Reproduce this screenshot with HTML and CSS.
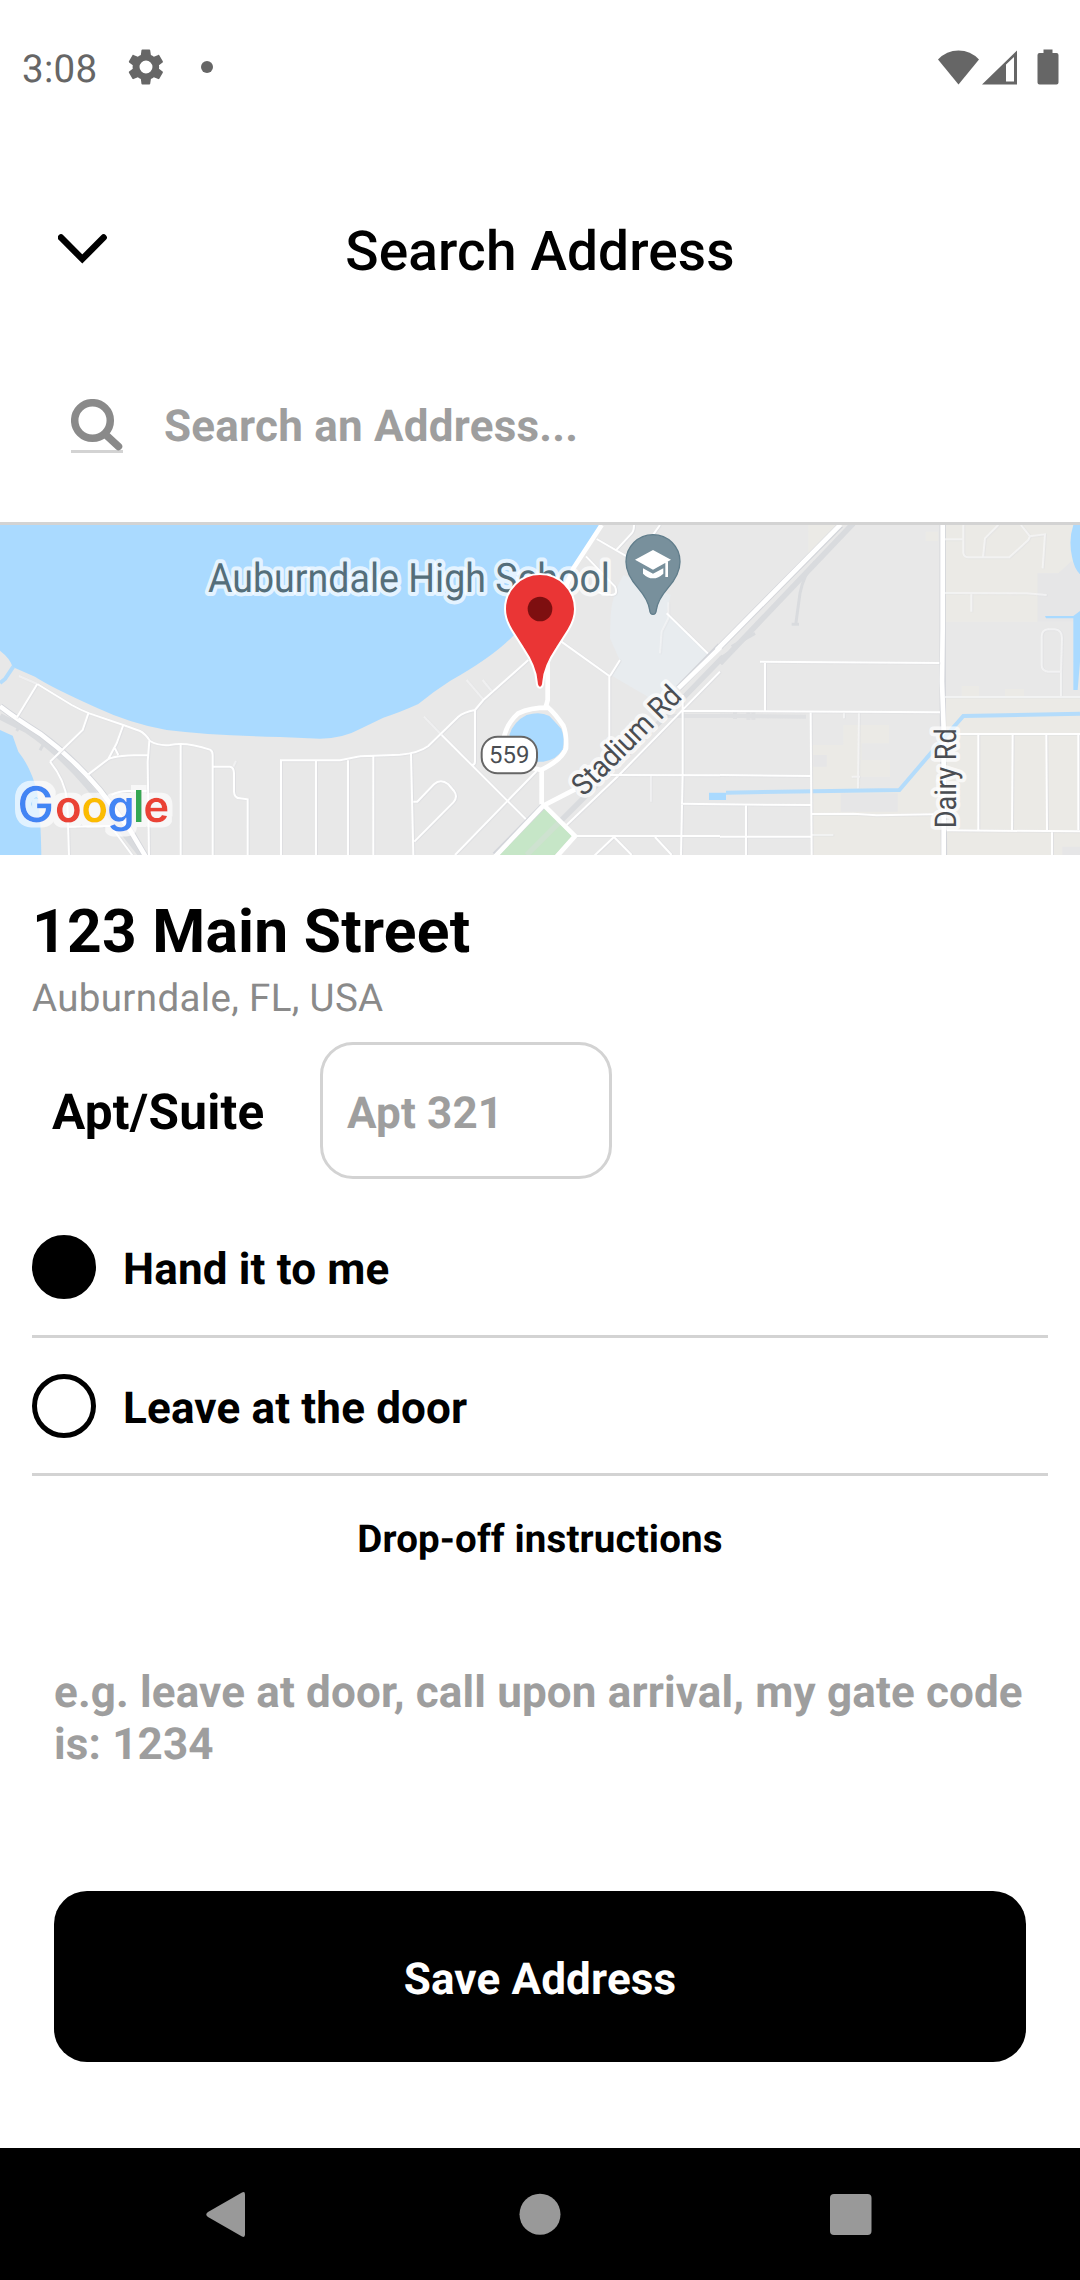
FILE: index.html
```html
<!DOCTYPE html>
<html lang="en">
<head>
<meta charset="utf-8">
<title>Search Address</title>
<link rel="stylesheet" href="styles.css">
</head>
<body>
<div class="screen">
  <div class="status">
    <span class="time">3:08</span>
    <svg class="gear" width="42" height="42" viewBox="0 0 24 24"><path d="M19.4 13c0-.3.1-.6.1-1s0-.7-.1-1l2.1-1.600c.2-.15.25-.4.1-.65l-2-3.450c-.1-.2-.4-.3-.6-.2l-2.500 1c-.5-.4-1.100-.75-1.700-1l-.4-2.650c0-.25-.2-.4-.5-.4h-4c-.25 0-.45.15-.5.4l-.35 2.650c-.6.25-1.200.6-1.700 1l-2.500-1c-.2-.1-.5 0-.6.2l-2 3.450c-.1.2-.1.5.1.65l2.100 1.600c0 .3-.1.700-.1 1s0 .7.1 1l-2.100 1.600c-.2.15-.25.4-.1.65l2 3.450c.1.2.4.3.6.2l2.500-1c.5.4 1.100.75 1.700 1l.35 2.650c.05.25.25.4.5.4h4c.25 0 .45-.15.5-.4l.4-2.650c.6-.25 1.200-.6 1.700-1l2.500 1c.2.1.5 0 .6-.2l2-3.450c.1-.2.1-.5-.1-.65zM12 15.700a3.700 3.700 0 1 1 0-7.400 3.700 3.700 0 0 1 0 7.400z"/></svg>
    <span class="dot"></span>
    <svg class="signals" width="121" height="36" viewBox="0 0 121 36"><path d="M0 10.500Q8.500 1.500 20.500 1.500T41 10.500L20.500 35.500z"/><path fill-rule="evenodd" d="M44 35.500L79 1.500V35.500zM68 15.500V32.500H76V8z"/><path d="M105.500 .500h9V4h4q2 0 2 2V33.500q0 2-2 2h-17q-2 0-2-2V6q0-2 2-2h4z"/></svg>
  </div>
  <header class="header">
    <svg class="chevron" width="50" height="31" viewBox="0 0 50 31"><path d="M3 3.500L24.300 25L45.600 3.500"/></svg>
    <h1>Search Address</h1>
  </header>
  <div class="search">
    <span class="search-icon"><svg width="52" height="52" viewBox="0 0 52 52"><circle cx="21.500" cy="21.500" r="17.800"/><path d="M34.500 35.500L47.500 47.500"/></svg></span>
    <span class="placeholder">Search an Address...</span>
  </div>
  <svg class="map" width="1080" height="330" viewBox="0 30 3240 990">
    <defs>
      <filter id="halo" x="-10%" y="-20%" width="120%" height="140%">
        <feMorphology in="SourceAlpha" operator="dilate" radius="15" result="wide"/>
        <feFlood flood-color="#fff" flood-opacity=".65"/>
        <feComposite in2="wide" operator="in" result="glow"/>
        <feMerge><feMergeNode in="glow"/><feMergeNode in="SourceGraphic"/></feMerge>
      </filter>
    </defs>
    <rect width="3240" height="1020" fill="#e8e8e8"/>
    <!-- western part: lake shore and residential streets -->
    <path class="water" d="M0 0H1812L1760 105L1700 190L1620 280L1540 362Q1480 425 1350 498Q1300 530 1255 567Q1200 592 1150 608L1080 642Q1030 670 960 671L840 666Q640 662 500 645Q390 625 290 578Q150 515 105 485L38 456Q30 430 0 407z"/>
    <path class="water" d="M0 645L38 662L55 710Q95 760 112 835Q122 900 124 1020H0z"/>
    <path class="creek" d="M40 455L15 492L0 504"/>
    <g class="rail"><path d="M0 604L80 645Q220 740 330 900L440 1040" stroke-width="19"/><path d="M50 648L60 630M120 706L132 685"/></g>
    <path class="highway-edge" d="M0 574Q50 612 120 656Q220 730 300 825L390 945L440 1030"/>
    <path class="highway" d="M0 574Q50 612 120 656Q220 730 300 825L390 945L440 1030"/>
    <g class="streets">
      <path d="M112 507L215 570Q240 584 268 595L370 630L420 648Q435 655 450 678Q475 693 510 690Q560 680 630 704Q638 708 638 720V1020"/>
      <path d="M112 507L50 608M265 595L248 645L150 740M370 630L350 685L325 732L265 778M345 700L355 720M325 732Q350 720 445 720M448 678L443 740L447 1020M150 740Q195 795 202 860L207 1020M207 935L330 933M335 840Q355 828 385 828H440M330 930L400 1025M542 686V1020M638 755H690Q702 757 702 775V830Q703 850 720 850L743 853V1020M843 1020V736H1020L1080 724M948 738V1020M1044 736V1020"/>
      <path d="M57 483L112 507M700 755L708 738" opacity=".45"/>
    </g>
    <!-- central part: ring road, park, school grounds -->
    <g transform="translate(1080)">
      <path d="M790 180Q755 240 752 300L750 370L779 435L752 480L880 555L955 520L1046 416L920 295L932 240z" fill="#e8ecef"/>
      <path d="M553 878L635 963L580 1025H413z" fill="#c6e6c7"/>
      <g class="rail"><path d="M1090 425L920 600L500 1020" stroke-width="16"/><path class="faint" d="M900 603H1080"/></g>
      <path d="M553 878L635 963L580 1025H413z" fill="#c6e6c7" opacity=".6"/>
      <g class="streets">
        <path d="M505 435L370 555L345 585Q310 592 295 605L205 693Q175 715 120 719L0 724M345 585V740Q345 750 335 750M245 660L500 915M40 724V1020M153 715L160 1020M160 860H172L222 808Q242 790 265 808L282 828Q295 845 280 862L163 980M530 768L285 1020"/>
        <path d="M600 377L748 483V700M780 435L750 483M710 72L800 124M770 104L815 55Q822 48 822 30M900 30L880 58M678 124L765 215Q775 240 755 240Q735 240 715 232M920 295L1046 418M968 540V780L963 1020M968 588H1080M750 780L1080 781M963 866L1080 868M645 963H1080M620 930L775 782L1080 470M762 966L700 1025M762 966L815 1020M885 966L935 1020"/>
        <path d="M192 605L245 660M320 495L370 553M368 495L395 528M925 262V310L905 350L900 415M873 781V860" opacity=".45"/>
      </g>
      <path class="highway-edge" d="M405 1020L550 872M955 520L1080 392"/>
      <path class="highway" d="M955 520L1090 388M405 1025L550 872L645 823M553 872L645 963L590 1025M545 868V765M555 578Q560 570 563 555V430M725 30L640 160L560 360M430 680Q435 630 475 595Q510 578 565 578Q585 595 610 632Q620 655 618 700Q605 735 543 765L480 750"/>
      <path class="water" d="M448 660Q460 620 500 600Q540 588 568 603Q580 615 604 642Q615 670 608 703Q590 735 550 740H510z"/>
    </g>
    <!-- eastern part: farmland and Dairy Rd -->
    <g transform="translate(2160)">
      <path d="M675 30H1080V175H953V320H675zM675 548H1080V1020H275V690H370V630H507V685H425V735H510V785H420V828H535L640 720L675 680zM265 30H370L265 130zM617 50H655V78H617zM725 513H777V548H725zM855 522H912V548H855z" fill="#ebeae6"/>
      <path d="M953 175H1015L1055 138L1080 175V320H953zM362 835H533V890H362zM1027 995H1080V1020H1027zM280 720H320V755H280z" fill="#e6e6e7"/>
      <g class="rail"><path d="M400 25L0 445" stroke-width="17"/><path d="M285 140Q250 180 240 235L227 330M215 328H237"/><path class="faint" d="M0 602L258 605M45 590V612M85 590V614M100 590V614"/><path d="M35 395L105 355M0 430L40 405"/></g>
      <path class="highway-edge" d="M362 30L0 395"/>
      <path class="highway" d="M362 28L-10 405"/>
      <path class="highway-edge" d="M668 30V500L672 1020"/>
      <path class="highway" d="M668 30V340L666 500L671 640V1020"/>
      <path class="water" d="M1060 30H1080V178Q1062 160 1056 125Q1045 75 1060 30zM975 303H1060L1080 288V440L1073 525H1060V310H978zM-33 833H18V855H-33z"/>
      <path class="creek" d="M18 833L538 825L632 715L730 603L1080 596"/>
      <g class="streets">
        <path d="M120 440L658 444M135 440V588M0 588L660 592M272 592L275 1020M0 780L272 783M0 868L272 870M78 870V1020M0 965H275M275 897L400 896L470 901L640 898M715 657H1080M775 657V945M878 657L876 945M979 657L981 945M1075 657V945M680 946L1080 949M996 950V1020"/>
        <path d="M675 73H730M730 30V115Q733 127 745 127H868L925 75L930 64L903 30M835 30L795 70L789 127M930 64L975 58L968 160M675 234L920 235L980 240M754 234V290M1023 547V470H985Q965 468 965 450V365Q965 345 985 343H1005Q1026 345 1026 370L1023 470M675 546H1080M417 595L414 820M372 595V610M395 785H420M275 960H340" opacity=".55"/>
      </g>
    </g>
    <g class="label school"><text x="624" y="231" textLength="1206" lengthAdjust="spacingAndGlyphs">Auburndale High School</text></g>
    <g class="label road"><text transform="translate(1751 847) rotate(-45)" textLength="422" lengthAdjust="spacingAndGlyphs">Stadium Rd</text><text transform="translate(2868 940) rotate(-90)" textLength="300" lengthAdjust="spacingAndGlyphs">Dairy Rd</text></g>
    <rect x="1445" y="665" width="166" height="110" rx="48" fill="#fff" stroke="#666" stroke-width="6"/>
    <text class="shield" x="1528" y="744" text-anchor="middle">559</text>
    <g transform="translate(1080)">
      <path d="M879 298Q870 298 869 285Q865 255 835 220Q798 178 798 140A81 81 0 0 1 960 140Q960 178 923 220Q893 255 889 285Q888 298 879 298z" fill="#78909c" stroke="#607d8b" stroke-width="4"/>
      <path d="M825 134L879 105L933 134L879 164zM916 140H924V186H916zM849 160L879 176L910 160V176Q895 190 879 190T849 176z" fill="#fff"/>
      <path d="M540 518Q531 518 530 500Q527 455 490 400L455 345Q435 312 435 282A105 105 0 0 1 645 282Q645 312 625 345L590 400Q553 455 550 500Q549 518 540 518z" fill="#ea3535" stroke="#fff" stroke-width="6"/>
      <circle cx="540" cy="282" r="37" fill="#7e0f10"/>
    </g>
    <text class="google" filter="url(#halo)" x="52 165 244 322 399 430" y="921"><tspan class="google-cap" fill="#4285f4">G</tspan><tspan fill="#ea4335">o</tspan><tspan fill="#fbbc05">o</tspan><tspan fill="#4285f4">g</tspan><tspan fill="#34a853">l</tspan><tspan fill="#ea4335">e</tspan></text>
  </svg>
  <main class="details">
    <h2>123 Main Street</h2>
    <p class="locality">Auburndale, FL, USA</p>
    <div class="apt">
      <label>Apt/Suite</label>
      <div class="apt-input placeholder">Apt 321</div>
    </div>
    <div class="option first"><span class="radio selected"></span><span class="option-text">Hand it to me</span></div>
    <div class="option second"><span class="radio"></span><span class="option-text">Leave at the door</span></div>
    <h3>Drop-off instructions</h3>
    <p class="instructions placeholder">e.g. leave at door, call upon arrival, my gate code is: 1234</p>
    <button class="save">Save Address</button>
  </main>
  <nav class="nav">
    <svg width="1080" height="132" viewBox="0 0 1080 132" fill="#999"><path d="M242 44.500Q245 43 245 46.500V86.500Q245 90 242 88.500L208 69Q204.500 66.500 208 64z"/><circle cx="540" cy="66.300" r="20.500"/><rect x="830" y="46" width="41.500" height="41" rx="4"/></svg>
  </nav>
</div>
</body>
</html>
```

FILE: styles.css
```css
* { box-sizing: border-box; }
body { margin: 0; background: #fff; font-family: Roboto, sans-serif; color: #000; text-rendering: geometricPrecision; }
h1, h2, h3, p { margin: 0; }
svg { display: block; }
.screen { width: 1080px; height: 2280px; display: flex; flex-direction: column; overflow: hidden; }
.status { height: 136px; padding: 0 21px 0 22px; display: flex; align-items: center; color: #666; fill: #666; }
.time { width: 75px; font-size: 38.5px; line-height: 46px; margin-top: 4px; letter-spacing: .3px; }
.gear { margin-left: 28px; margin-top: -2px; }
.dot { width: 12px; height: 12px; border-radius: 50%; background: #666; margin: -2px 0 0 34px; }
.signals { margin-left: auto; margin-top: -3px; }
.header { height: 230px; display: grid; grid-template-columns: 58px 1fr 58px; align-items: center; }
.header h1 { grid-column: 2; grid-row: 1; text-align: center; font-size: 55px; font-weight: 500; line-height: 64px; letter-spacing: .12px; padding-top: 2px; }
.chevron { grid-column: 2; grid-row: 1; fill: none; stroke: #000; stroke-width: 6.5; stroke-linecap: round; margin-top: -3px; }
.search { height: 159px; border-bottom: 3px solid #d3d3d3; padding: 33px 0 0 71px; display: flex; align-items: flex-start; }
.search-icon { width: 52px; border-bottom: 3px solid #d3d3d3; height: 54px; margin-right: 41px; }
.search-icon svg { fill: none; stroke: #8a8a8a; stroke-width: 7.5; stroke-linecap: round; }
.search .placeholder { margin-top: 1px; letter-spacing: .22px; }
.placeholder { font-size: 44px; line-height: 52px; font-weight: 700; color: #9e9e9e; letter-spacing: .14px; }
.map { flex: none; }
.water { fill: #aadaff; }
.creek { fill: none; stroke: #b4dcfb; stroke-width: 12; }
.rail { fill: none; stroke: #d9dbde; stroke-width: 9; }
.faint { stroke-width: 12; opacity: .6; }
.highway { fill: none; stroke: #fff; stroke-width: 14; }
.highway-edge { fill: none; stroke: #d3d5da; stroke-width: 19; }
.streets { fill: none; stroke: #fff; stroke-width: 6; filter: drop-shadow(2px 1px 0 #d9dade); }
.label { paint-order: stroke; stroke: rgba(255,255,255,.7); stroke-width: 24; stroke-linejoin: round; }
.school { font-size: 122px; fill: #546e7a; }
.road { font-size: 90px; fill: #4a4d52; }
.shield { font-size: 72px; fill: #4a4d52; }
.google { font-family: Inter, sans-serif; font-weight: 600; font-size: 132px; }
.google-cap { font-size: 148px; font-weight: 500; }
.details { flex: 1; padding: 41px 32px 0; }
.details h2 { font-size: 60.5px; line-height: 71px; font-weight: 700; letter-spacing: .25px; }
.locality { font-size: 38.5px; line-height: 46px; margin-top: 9px; color: #8a8a8a; letter-spacing: .35px; }
.apt { display: flex; align-items: center; margin-top: 20px; padding-left: 20px; }
.apt label { width: 268px; font-size: 49.5px; font-weight: 700; line-height: 58px; padding-top: 5px; letter-spacing: .25px; }
.apt-input { width: 292px; height: 137px; border: 3px solid #d3d3d3; border-radius: 33px; padding: 42px 24px; }
.option { height: 138px; border-bottom: 3px solid #d3d3d3; display: flex; align-items: center; font-size: 44px; font-weight: 700; letter-spacing: .16px; }
.first { margin-top: 21px; }
.second { padding-top: 2px; }
.option-text { margin-top: 3px; }
.radio { width: 64px; height: 64px; border: 5px solid #000; border-radius: 50%; margin: -2px 27px 0 0; }
.radio.selected { background: #000; }
.details h3 { font-size: 38.5px; line-height: 46px; text-align: center; margin-top: 41px; letter-spacing: .13px; }
.instructions { margin: 103px 22px 0; }
.save { display: block; width: 972px; height: 171px; margin: 121px 22px 0; padding: 4px 0 0; border: 0; border-radius: 33px; background: #000; color: #fff; font: 700 44px/52px Roboto, sans-serif; text-rendering: inherit; letter-spacing: .15px; }
.nav { height: 132px; background: #000; }
```
